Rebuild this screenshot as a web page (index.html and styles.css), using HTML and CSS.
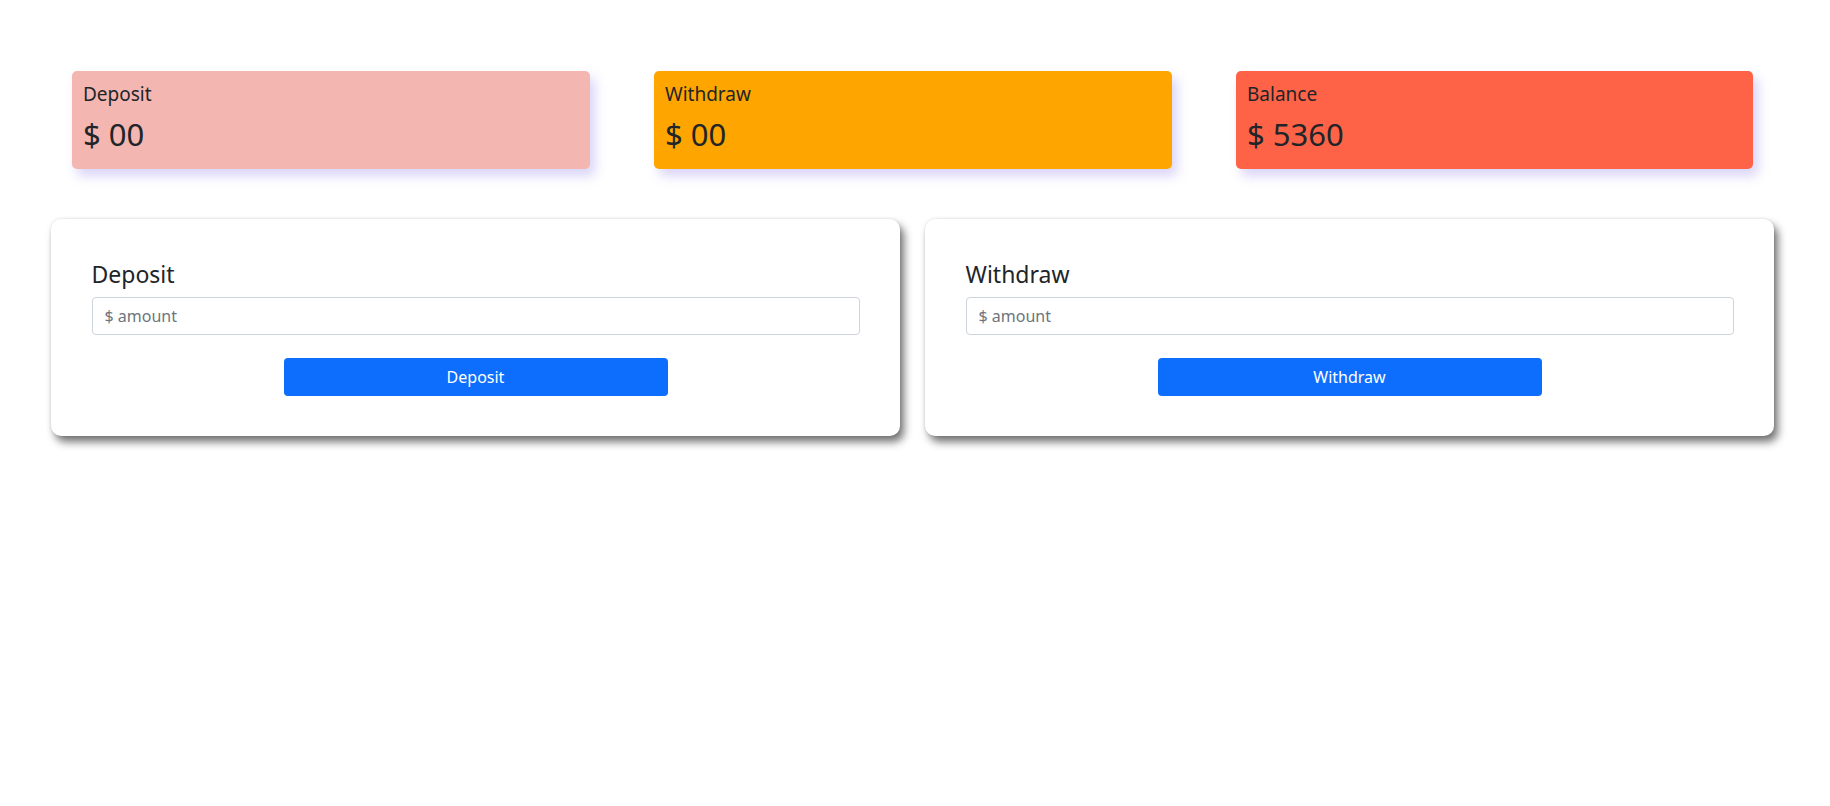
FILE: index.html
```html
<!DOCTYPE html>
<html lang="en">
<head>
<meta charset="utf-8">
<title>Bank</title>
<link rel="stylesheet" href="styles.css">
</head>
<body>
  <div class="page">
    <div class="summary-row">
      <div class="stat-card stat-deposit">
        <div class="stat-label">Deposit</div>
        <div class="stat-value">$ 00</div>
      </div>
      <div class="stat-card stat-withdraw">
        <div class="stat-label">Withdraw</div>
        <div class="stat-value">$ 00</div>
      </div>
      <div class="stat-card stat-balance">
        <div class="stat-label">Balance</div>
        <div class="stat-value">$ 5360</div>
      </div>
    </div>

    <div class="forms-row">
      <div class="form-card">
        <h4 class="form-title">Deposit</h4>
        <input class="amount-input" type="text" placeholder="$ amount">
        <button class="action-btn" type="button">Deposit</button>
      </div>
      <div class="form-card">
        <h4 class="form-title">Withdraw</h4>
        <input class="amount-input" type="text" placeholder="$ amount">
        <button class="action-btn" type="button">Withdraw</button>
      </div>
    </div>
  </div>
</body>
</html>
```

FILE: styles.css
```css
* {
  box-sizing: border-box;
}

html,
body {
  margin: 0;
  background: #ffffff;
}

body {
  color: #212529;
  font-family: "Noto Sans", "Open Sans", sans-serif;
}

.page {
  min-height: 806px;
  padding-bottom: 60px;
}

.summary-row {
  display: flex;
  gap: 64px;
  padding: 71px 0 0 72px;
}

.stat-card {
  flex: none;
  width: 518px;
  height: 98px;
  padding: 9px 11px 0;
  border-radius: 5px;
  box-shadow: 5px 7px 12px rgba(120, 100, 225, 0.28);
}

.stat-deposit {
  background: #f4b6b0;
}

.stat-withdraw {
  background: #ffa500;
}

.stat-balance {
  background: #ff6347;
  width: 517px;
}

.stat-label {
  font-size: 19px;
  line-height: 1.5;
  margin-bottom: 7px;
}

.stat-value {
  font-size: 31px;
  line-height: 1.2;
}

.forms-row {
  display: flex;
  gap: 25px;
  padding: 50px 0 0 51px;
}

.form-card {
  flex: none;
  width: 849px;
  padding: 42px 40.5px 40px;
  background: #ffffff;
  border-radius: 10px;
  box-shadow: 4px 6px 8px rgba(0, 0, 0, 0.55), 0 0 3px rgba(0, 0, 0, 0.12);
}

.form-title {
  margin: 0 0 8px;
  font-size: 23px;
  font-weight: 400;
  line-height: 1.2;
}

.amount-input {
  display: block;
  width: 100%;
  height: 38px;
  padding: 6px 12px;
  font-family: inherit;
  font-size: 16px;
  color: #212529;
  background: #ffffff;
  border: 1px solid #ced4da;
  border-radius: 4px;
  outline: none;
}

.amount-input::placeholder {
  color: #6c757d;
}

.action-btn {
  display: block;
  width: 50%;
  height: 38px;
  margin: 23.5px auto 0;
  padding: 0;
  font-family: inherit;
  font-size: 16px;
  color: #ffffff;
  background: #0d6efd;
  border: none;
  border-radius: 4px;
}
```
